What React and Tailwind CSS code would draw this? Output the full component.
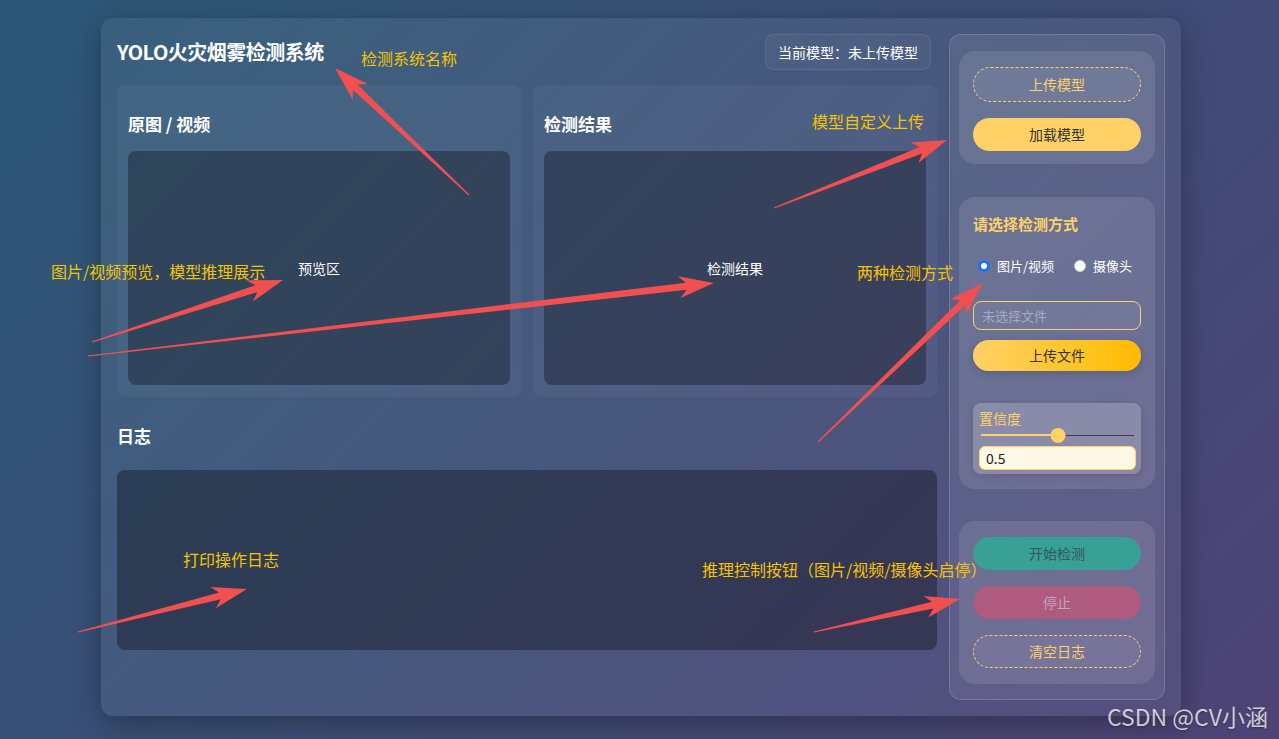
import React from "react";

// red callout arrows: tapered shaft + swept-back head
const arrows = [
  [469, 195, 335, 68],
  [774, 208, 947, 140],
  [92, 342, 283, 280],
  [88, 356, 714, 283],
  [818, 442, 983, 283],
  [78, 632, 247, 589],
  [814, 632, 960, 599],
];

const arrowPoints = ([x1, y1, x2, y2]) => {
  const dx = x2 - x1;
  const dy = y2 - y1;
  const len = Math.hypot(dx, dy);
  const ux = dx / len;
  const uy = dy / len;
  const nx = -uy;
  const ny = ux;
  const head = 32;
  const bx = x2 - ux * head;
  const by = y2 - uy * head;
  const pts = [
    [x1 + nx * 0.6, y1 + ny * 0.6],
    [bx + ux * 4 + nx * 3.5, by + uy * 4 + ny * 3.5],
    [bx - ux * 3 + nx * 11, by - uy * 3 + ny * 11],
    [x2, y2],
    [bx - ux * 3 - nx * 11, by - uy * 3 - ny * 11],
    [bx + ux * 4 - nx * 3.5, by + uy * 4 - ny * 3.5],
    [x1 - nx * 0.6, y1 - ny * 0.6],
  ];
  return pts.map((p) => p.join(",")).join(" ");
};

const notes = [
  { text: "检测系统名称", left: 361, top: 50 },
  { text: "模型自定义上传", left: 812, top: 113 },
  { text: "图片/视频预览，模型推理展示", left: 51, top: 263 },
  { text: "两种检测方式", left: 857, top: 264 },
  { text: "打印操作日志", left: 183, top: 551 },
  { text: "推理控制按钮（图片/视频/摄像头启停）", left: 702, top: 561 },
];

const Panel = ({ title, label }) => (
  <div className="bg-white/[0.04] rounded-lg px-[11px] pt-[11px] pb-3 h-[312px]">
    <div className="h-[55px] flex items-center text-[17px] font-bold text-white">
      {title}
    </div>
    <div className="h-[234px] rounded-lg bg-black/30 flex items-center justify-center text-[14px] text-white">
      {label}
    </div>
  </div>
);

const Radio = ({ checked, label }) => (
  <label className="flex items-center gap-[7px] text-[13px] text-white">
    <span
      className={`w-3 h-3 rounded-full bg-white ${
        checked ? "border-[3px] border-[#1a73e8]" : "border border-[#ccc]"
      }`}
    />
    {label}
  </label>
);

export default function App() {
  return (
    <div className="relative w-full h-[739px] overflow-hidden bg-[linear-gradient(135deg,#2b5876,#4e4376)] pl-[101px] pt-[18px] font-['Noto_Sans_CJK_SC',sans-serif]">
      {/* main card */}
      <div className="w-[1080px] h-[698px] rounded-xl bg-white/[0.06] shadow-[0_8px_30px_rgba(0,0,0,0.3)] p-4 flex gap-3">
        {/* left column */}
        <div className="w-[820px] flex flex-col">
          <div className="h-9 flex items-center justify-between">
            <h1 className="text-[20px] font-bold text-white tracking-tight">YOLO火灾烟雾检测系统</h1>
            <div className="mr-[6px] h-9 px-3 flex items-center rounded-lg bg-white/[0.04] border border-white/[0.08] text-[14px] text-white">
              当前模型：未上传模型
            </div>
          </div>

          <div className="mt-[15px] grid grid-cols-2 gap-3">
            <Panel title="原图 / 视频" label="预览区" />
            <Panel title="检测结果" label="检测结果" />
          </div>

          <div className="h-[73px] pt-[5px] flex items-center text-[17px] font-bold text-white">日志</div>
          <div className="h-[180px] rounded-lg bg-black/[0.33]" />
        </div>

        {/* right sidebar */}
        <div className="w-[216px] rounded-xl bg-white/[0.08] border border-white/15 px-[9px] pt-4 flex flex-col">
          <div className="rounded-2xl bg-white/10 px-[14px] pt-4 pb-[13px] flex flex-col gap-4">
            <button className="h-[35px] rounded-full border border-dashed border-[#ffd166] bg-white/[0.05] text-[14px] text-[#ffd166]">
              上传模型
            </button>
            <button className="h-[33px] rounded-full bg-[#ffd166] text-[14px] text-[#333]">加载模型</button>
          </div>

          <div className="mt-[33px] h-[292px] rounded-2xl bg-white/10 px-[14px] pt-[17px]">
            <div className="h-5 flex items-center text-[15px] font-bold text-[#ffd166]">请选择检测方式</div>
            <div className="mt-[22px] h-5 px-[5px] flex items-center gap-[20px]">
              <Radio checked label="图片/视频" />
              <Radio label="摄像头" />
            </div>
            <div className="mt-[25px] h-[29px] rounded-lg border border-[#ffd166] bg-white/[0.05] px-2 flex items-center text-[13px] text-[#a9a8bf]">
              未选择文件
            </div>
            <button className="mt-[10px] w-full h-[31px] rounded-full bg-[linear-gradient(90deg,#ffd166,#ffbb00)] text-[14px] text-[#333] shadow-[0_3px_8px_rgba(0,0,0,0.15)]">
              上传文件
            </button>
            <div className="mt-8 h-[71px] rounded-lg bg-white/20 pl-[6px] pr-[5px] pt-[6px] flex flex-col shadow-[0_2px_8px_rgba(0,0,0,0.12)]">
              <div className="text-[14px] leading-[18px] text-[#ffd166]">置信度</div>
              <div className="relative h-4 mx-[2px] flex items-center">
                <div className="w-1/2 h-[2px] bg-[#ffd166]" />
                <div className="flex-1 h-[1px] bg-[#3a3a4a]" />
                <div className="absolute left-1/2 -translate-x-1/2 w-[15px] h-[15px] rounded-full bg-[#ffd166]" />
              </div>
              <div className="mt-[3px] h-6 rounded-md border border-[#ffd166] bg-[#fff8e6] px-[6px] flex items-center text-[14px] text-[#222]">
                0.5
              </div>
            </div>
          </div>

          <div className="mt-8 rounded-2xl bg-white/10 px-[14px] py-4 flex flex-col gap-4">
            <button className="h-[33px] rounded-full bg-[#39a096] text-[14px] text-[#2f5868]">开始检测</button>
            <button className="h-[33px] rounded-full bg-[#ae5b7e] text-[14px] text-[#c3a2c4]">停止</button>
            <button className="h-[33px] rounded-full border border-dashed border-[#ffd166] bg-white/[0.05] text-[14px] text-[#ffd166]">
              清空日志
            </button>
          </div>
        </div>
      </div>

      {/* callout notes */}
      {notes.map((n) => (
        <div
          key={n.text}
          className="absolute text-[16px] leading-4 text-[#f5c400] whitespace-nowrap"
          style={{ left: n.left, top: n.top }}
        >
          {n.text}
        </div>
      ))}

      <svg className="absolute inset-0 pointer-events-none" width="1279" height="739">
        {arrows.map((a, i) => (
          <polygon key={i} points={arrowPoints(a)} fill="#f25050" />
        ))}
      </svg>

      <div className="absolute left-[1107px] top-[702px] text-[23px] leading-7 text-white/75 whitespace-nowrap [text-shadow:0_1px_2px_rgba(0,0,0,0.3)]">
        CSDN @CV小涵
      </div>
    </div>
  );
}
